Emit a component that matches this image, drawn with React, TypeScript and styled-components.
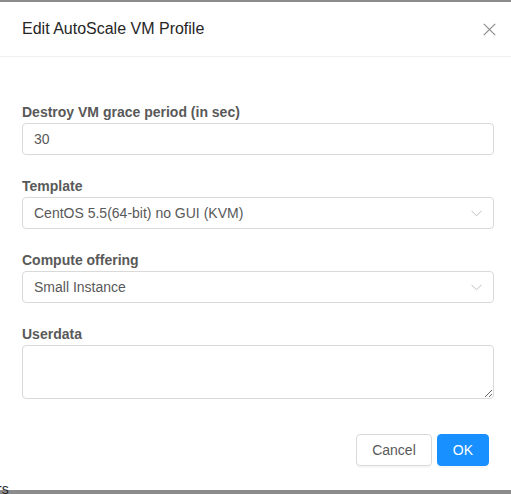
import React from "react";
import styled, { createGlobalStyle } from "styled-components";

const Global = createGlobalStyle`
  html, body { margin: 0; padding: 0; }
  body {
    background: #8c8c8c;
    font-family: "Liberation Sans", Arial, sans-serif;
    overflow: hidden;
  }
  * { box-sizing: border-box; }
`;

const Page = styled.div`
  width: 511px;
  height: 494px;
  padding-top: 2px;
  position: relative;
  overflow: hidden;
`;

const Modal = styled.div`
  background: #fff;
  width: 511px;
  height: 488px;
  display: flex;
  flex-direction: column;
`;

const Header = styled.div`
  height: 55px;
  border-bottom: 1px solid #f0f0f0;
  display: flex;
  align-items: center;
  justify-content: space-between;
  padding: 0 14px 0 22px;
`;

const Title = styled.div`
  font-size: 16px;
  line-height: 22px;
  color: #262626;
`;

const CloseBtn = styled.button`
  border: none;
  background: transparent;
  padding: 0;
  width: 16px;
  height: 16px;
  display: flex;
  align-items: center;
  justify-content: center;
  cursor: pointer;
  margin-top: 1px;
`;

const Body = styled.div`
  padding: 44px 17px 0 22px;
  display: flex;
  flex-direction: column;
  gap: 20px;
`;

const Item = styled.div`
  display: flex;
  flex-direction: column;
`;

const Label = styled.label`
  font-size: 14px;
  font-weight: bold;
  line-height: 22px;
  color: #595959;
`;

const Input = styled.input`
  height: 32px;
  width: 100%;
  border: 1px solid #d9d9d9;
  border-radius: 4px;
  padding: 0 11px;
  font-family: inherit;
  font-size: 14px;
  color: #595959;
  outline: none;
`;

const Select = styled.div`
  height: 32px;
  width: 100%;
  border: 1px solid #d9d9d9;
  border-radius: 4px;
  padding: 0 11px;
  display: flex;
  align-items: center;
  justify-content: space-between;
  font-size: 14px;
  color: #595959;
`;

const TextArea = styled.textarea`
  height: 54px;
  width: 100%;
  border: 1px solid #d9d9d9;
  border-radius: 4px;
  padding: 4px 11px;
  font-family: inherit;
  font-size: 14px;
  outline: none;
  display: block;
`;

const Footer = styled.div`
  display: flex;
  justify-content: flex-end;
  gap: 5px;
  padding: 35px 22px 0 0;
`;

const Button = styled.button<{ $primary?: boolean }>`
  height: 32px;
  padding: 0 15px;
  border-radius: 4px;
  font-family: inherit;
  font-size: 14px;
  border: 1px solid ${(p) => (p.$primary ? "#1890ff" : "#d9d9d9")};
  background: ${(p) => (p.$primary ? "#1890ff" : "#fff")};
  color: ${(p) => (p.$primary ? "#fff" : "#595959")};
  box-shadow: 0 2px 0 rgba(0, 0, 0, 0.03);
  cursor: pointer;
`;

const BehindText = styled.span`
  position: absolute;
  left: -3px;
  bottom: -2px;
  font-size: 14px;
  color: #262626;
  line-height: 14px;
`;

const Chevron = () => (
  <svg width="11" height="7" viewBox="0 0 11 7" fill="none">
    <path d="M0.5 0.8 L5.5 5.8 L10.5 0.8" stroke="#bfbfbf" strokeWidth="1" />
  </svg>
);

export default function App() {
  return (
    <Page>
      <Global />
      <Modal>
        <Header>
          <Title>Edit AutoScale VM Profile</Title>
          <CloseBtn aria-label="Close">
            <svg width="13" height="13" viewBox="0 0 13 13" fill="none">
              <path d="M0.8 0.8 L12.2 12.2 M12.2 0.8 L0.8 12.2" stroke="#8c8c8c" strokeWidth="1.2" />
            </svg>
          </CloseBtn>
        </Header>
        <Body>
          <Item>
            <Label>Destroy VM grace period (in sec)</Label>
            <Input defaultValue="30" />
          </Item>
          <Item>
            <Label>Template</Label>
            <Select>
              <span>CentOS 5.5(64-bit) no GUI (KVM)</span>
              <Chevron />
            </Select>
          </Item>
          <Item>
            <Label>Compute offering</Label>
            <Select>
              <span>Small Instance</span>
              <Chevron />
            </Select>
          </Item>
          <Item>
            <Label>Userdata</Label>
            <TextArea />
          </Item>
        </Body>
        <Footer>
          <Button>Cancel</Button>
          <Button $primary>OK</Button>
        </Footer>
      </Modal>
      <BehindText>rs</BehindText>
    </Page>
  );
}
